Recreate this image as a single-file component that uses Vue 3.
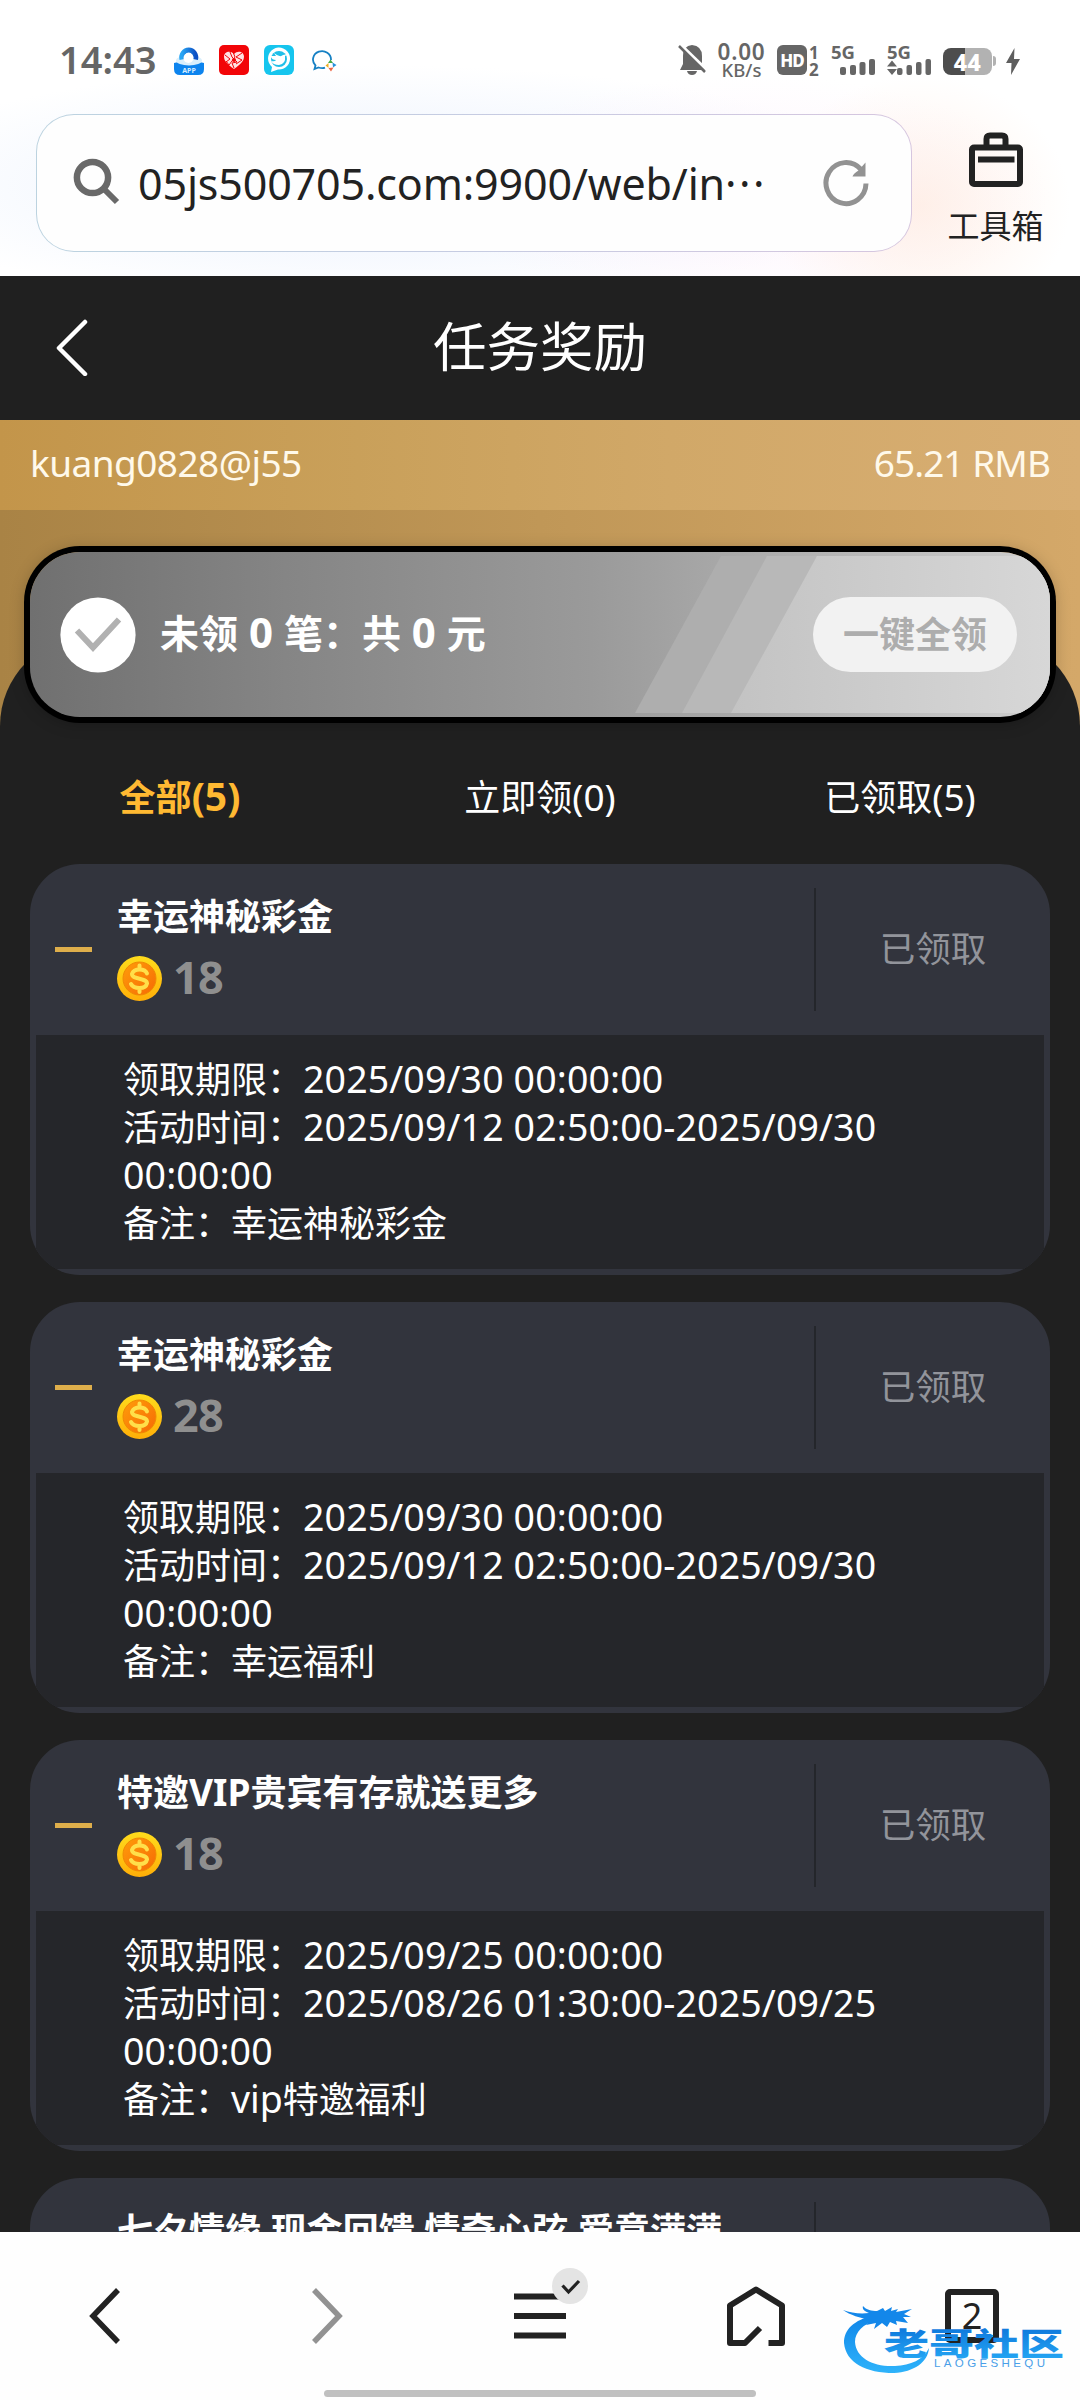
<script setup>
const tabs = [
  { label: '全部', count: 5, active: true },
  { label: '立即领', count: 0, active: false },
  { label: '已领取', count: 5, active: false },
]

const status = '已领取'

const rewards = [
  {
    title: [{ t: '幸运神秘彩金' }],
    amount: 18,
    deadline: '2025/09/30 00:00:00',
    from: '2025/09/12 02:50:00-2025/09/30',
    to: '00:00:00',
    note: [{ t: '幸运神秘彩金' }],
  },
  {
    title: [{ t: '幸运神秘彩金' }],
    amount: 28,
    deadline: '2025/09/30 00:00:00',
    from: '2025/09/12 02:50:00-2025/09/30',
    to: '00:00:00',
    note: [{ t: '幸运福利' }],
  },
  {
    title: [{ t: '特邀' }, { t: 'VIP', latin: true }, { t: '贵宾有存就送更多' }],
    amount: 18,
    deadline: '2025/09/25 00:00:00',
    from: '2025/08/26 01:30:00-2025/09/25',
    to: '00:00:00',
    note: [{ t: 'vip', latin: true }, { t: '特邀福利' }],
  },
  {
    title: [{ t: '七夕情缘 现金回馈 情奇心弦 爱意满满' }],
    amount: null,
  },
]
</script>

<template>
  <div class="screen">
    <header class="browser">
      <div class="status-bar">
        <div class="status-left">
          <span class="clock">14:43</span>
          <svg class="app-icon" width="30" height="30" viewBox="0 0 30 30">
            <defs>
              <linearGradient id="arc" x1="0" x2="1"><stop offset="0" stop-color="#2aa6f4" /><stop offset="1" stop-color="#0b4fc4" /></linearGradient>
            </defs>
            <path d="M0 18q15-5 30 0v6q0 6-6 6H6q-6 0-6-6z" fill="#0d84ee" />
            <ellipse cx="15" cy="15.500" rx="13" ry="5" fill="#d9effc" />
            <path d="M8 14.500a7 7.500 0 1 1 13.500 0" fill="none" stroke="url(#arc)" stroke-width="5" />
            <circle cx="14.500" cy="13" r="5" fill="#fff" />
            <text x="15" y="28" text-anchor="middle" font-size="7" font-weight="700" fill="#d5ecff" class="latin">APP</text>
          </svg>
          <svg class="app-icon" width="30" height="30" viewBox="0 0 30 30">
            <rect width="30" height="30" rx="5" fill="#f20508" />
            <path d="M15 24C8 19 5 16 5 11.500 5 7 11 4.500 15 9c4-4.500 10-2 10 2.500C25 16 22 19 15 24z" fill="#ffe3e3" />
            <path d="M6 10l5 4-4 3m4-10 2 5 5 5-5 1 2 5m8-15-6 4 6 3-6 4m-3-12 2 5-6 8-3-4" fill="none" stroke="#f20508" stroke-width="1" />
            <circle cx="15" cy="15" r="2" fill="#f20508" />
          </svg>
          <svg class="app-icon" width="30" height="30" viewBox="0 0 30 30">
            <rect width="30" height="30" rx="6" fill="#16c5ee" />
            <path d="M7 27l1-5a11 11 0 1 1 6 2.500z" fill="#fff" />
            <circle cx="15" cy="14" r="8" fill="#20bfe8" />
            <path d="M4 11h8l-2-3q6 5 9 2l5-1-3 2q1 8-6 9-6 0-8-4 4 1 5-1-4 0-5-3z" fill="#fff" />
          </svg>
          <svg class="chat-icon" width="26" height="24" viewBox="0 0 26 24">
            <path d="M20 10a9 8.500 0 1 0-15.500 5.500L3.500 19l4-1.500q4 1.200 6.500.2" fill="none" stroke="#1680c4" stroke-width="1.800" />
            <path d="M17 13l2.500-3.500L22 13z" fill="#45aa43" /><path d="M21.500 12.500l4 2.500-3.500 2.500z" fill="#2492dc" />
            <path d="M22.500 17.500l-2.500 4-2.500-3.500z" fill="#ec6543" /><path d="M17.500 18l-3-2.500 3-2.500z" fill="#f0ad21" />
          </svg>
        </div>
        <div class="status-right">
          <svg class="bell" width="28" height="32" viewBox="0 0 28 32">
            <path d="M14 1q10 1 10 11v8l3 6H2l3-6v-8Q5 2 14 1z" fill="#666" />
            <path d="M9 27h10q-1 4-5 4t-5-4z" fill="#666" />
            <path d="M2 0l27 26" stroke="#fff" stroke-width="3" />
            <path d="M1 2l26 26" stroke="#666" stroke-width="2.500" />
          </svg>
          <div class="speed"><span class="rate">0.00</span><span class="unit">KB/s</span></div>
          <div class="hd">HD</div>
          <div class="sims"><span>1</span><span>2</span></div>
          <svg class="sig1" width="45" height="38" viewBox="0 -6 45 38">
            <text x="0" y="15" font-size="18.500" font-weight="700" fill="#666" class="latin" textLength="24" lengthAdjust="spacingAndGlyphs">5G</text>
            <g fill="#666"><rect x="9" y="23" width="6" height="8" rx="2" /><rect x="19" y="21" width="6" height="10" rx="2" /><rect x="28.500" y="18" width="6" height="13" rx="2" /><rect x="38" y="15" width="6" height="16" rx="2" /></g>
          </svg>
          <svg class="sig2" width="45" height="38" viewBox="0 -6 45 38">
            <text x="0" y="15" font-size="18.500" font-weight="700" fill="#666" class="latin" textLength="24" lengthAdjust="spacingAndGlyphs">5G</text>
            <path d="M0 22.500l5-6 5 6zM0 25l5 6 5-6z" fill="#666" />
            <g fill="#666"><rect x="10" y="24" width="5.500" height="7" rx="2" /><rect x="19.500" y="21" width="5.500" height="10" rx="2" /><rect x="29" y="18" width="5.500" height="13" rx="2" /><rect x="38.500" y="15" width="5.500" height="16" rx="2" /></g>
          </svg>
          <div class="battery">44</div><i class="cap"></i>
          <svg class="bolt" width="14" height="27" viewBox="0 0 14 27"><path d="M8.500 0L0 15h5.500L5 27l9-16H8z" fill="#5e5e5e" /></svg>
        </div>
      </div>
      <div class="address-row">
        <div class="address">
          <svg class="search" width="50" height="50" viewBox="0 0 50 50">
            <circle cx="20.500" cy="20.500" r="15.600" fill="none" stroke="#696969" stroke-width="6.500" />
            <path d="M31 31L45 45" stroke="#696969" stroke-width="6" />
          </svg>
          <span class="url latin">05js500705.com:9900/web/in<b>···</b></span>
          <svg class="reload" width="48" height="48" viewBox="0 0 48 48">
            <path d="M44 24.500A20 20.500 0 1 1 39 10.500" fill="none" stroke="#929292" stroke-width="5" />
            <path d="M43.500 3.500v14H30.500q1-3 6-6z" fill="#929292" />
          </svg>
        </div>
        <div class="toolbox">
          <svg width="54" height="56" viewBox="0 0 54 56">
            <path d="M17.500 15V7q0-3.500 3.500-3.500h12q3.500 0 3.500 3.500v8" fill="none" stroke="#222" stroke-width="6" />
            <rect x="3" y="15.500" width="48" height="36.500" rx="2" fill="none" stroke="#222" stroke-width="6" />
            <path d="M9 27.500h36.500" stroke="#222" stroke-width="6" />
          </svg>
          <span>工具箱</span>
        </div>
      </div>
    </header>

    <main class="page">
      <div class="title-bar">
        <svg class="back" width="34" height="58" viewBox="0 0 34 58"><path d="M31 4L5 30l26 26" fill="none" stroke="#fff" stroke-width="4.500" stroke-linecap="round" stroke-linejoin="round" /></svg>
        <h1>任务奖励</h1>
      </div>
      <div class="account latin"><span class="user">kuang0828@j55</span><span class="money">65.21 RMB</span></div>

      <div class="hero">
        <div class="panel-top"></div>
        <section class="claim">
          <svg class="shine" width="420" height="165" viewBox="0 0 420 165" preserveAspectRatio="none">
            <defs>
              <linearGradient id="glow" x1="0" x2="1"><stop offset="0" stop-color="#c3c3c3" /><stop offset="1" stop-color="#d7d7d7" /></linearGradient>
            </defs>
            <path d="M5 161L91 4h329v157z" fill="#aeaeae" />
            <path d="M52 161L137 4h283v157z" fill="#b8b8b8" />
            <path d="M101 161L187 4h233v157z" fill="url(#glow)" />
          </svg>
          <svg class="tick" width="76" height="76" viewBox="0 0 76 76">
            <circle cx="38" cy="38" r="37.600" fill="#fff" />
            <path d="M17 33.500l16 17L59 22.500" fill="none" stroke="#b1b1b1" stroke-width="6" />
          </svg>
          <span class="claim-text">未领<i class="latin"> 0 </i>笔：共<i class="latin"> 0 </i>元</span>
          <button class="claim-btn">一键全领</button>
        </section>
      </div>

      <nav class="tabs">
        <span v-for="t in tabs" :key="t.label" :class="{ active: t.active }">{{ t.label }}<i class="latin">({{ t.count }})</i></span>
      </nav>

      <section class="list">
        <article v-for="(r, i) in rewards" :key="i" class="card">
          <div class="card-head">
            <i class="dash"></i>
            <div class="info">
              <h2><span v-for="(p, k) in r.title" :key="k" :class="{ latin: p.latin, inl: p.latin }">{{ p.t }}</span></h2>
              <div v-if="r.amount" class="amount">
                <svg width="45" height="45" viewBox="0 0 45 45">
                  <defs>
                    <linearGradient id="rim" x1="0" x2="0" y1="0" y2="1"><stop offset="0" stop-color="#ffdc1c" /><stop offset="1" stop-color="#ffae08" /></linearGradient>
                    <linearGradient id="core" x1="0" x2="1" y1="0" y2="1"><stop offset="0" stop-color="#ff9d0a" /><stop offset="1" stop-color="#f66a05" /></linearGradient>
                  </defs>
                  <circle cx="22.500" cy="22.500" r="22.500" fill="url(#rim)" />
                  <circle cx="22.500" cy="22.500" r="16.500" fill="url(#core)" stroke="#ef8904" stroke-width="1" />
                  <path d="M22.500 9.500v4m0 18.500v4M30 17.500q-1.500-4-7.500-4t-7.500 4.500c0 6 15 3.500 15 9.500q-1 4.500-7.500 4.500T14 28" fill="none" stroke="#ffdf4a" stroke-width="4" stroke-linecap="round" />
                </svg>
                <b class="latin">{{ r.amount }}</b>
              </div>
            </div>
            <div class="state"><template v-if="r.amount">{{ status }}</template></div>
          </div>
          <div v-if="r.amount" class="card-body">
            <p>领取期限：<i class="latin">{{ r.deadline }}</i></p>
            <p>活动时间：<i class="latin">{{ r.from }}</i></p>
            <p><i class="latin">{{ r.to }}</i></p>
            <p>备注：<span v-for="(p, k) in r.note" :key="k" :class="{ latin: p.latin, inl: p.latin }">{{ p.t }}</span></p>
          </div>
        </article>
      </section>
    </main>

    <footer class="toolbar">
      <div class="slot"><svg class="prev" width="34" height="56" viewBox="0 0 34 56"><path d="M30 2L5 28l25 26" fill="none" stroke="#222" stroke-width="5.500" /></svg></div>
      <div class="slot"><svg class="next" width="34" height="56" viewBox="0 0 34 56"><path d="M4 2l25 26L4 54" fill="none" stroke="#929292" stroke-width="5.500" /></svg></div>
      <div class="slot">
        <div class="menu">
          <svg width="52" height="46" viewBox="0 0 52 46"><path d="M0 3.500h52M0 23h52M0 42.500h52" stroke="#222" stroke-width="6" /></svg>
          <svg class="badge" width="36" height="36" viewBox="0 0 36 36"><circle cx="18" cy="18" r="18" fill="#e4e4e4" /><path d="M10.500 17.500l6 6.500L27 13" fill="none" stroke="#222" stroke-width="3.200" /></svg>
        </div>
      </div>
      <div class="slot"><svg width="60" height="62" viewBox="0 0 60 62"><path d="M42.500 58H56V20.500L30 4.500 4 20.500V58H19L34 43" fill="none" stroke="#222" stroke-width="6" stroke-linejoin="round" /></svg></div>
      <div class="slot"><div class="pages latin">2</div></div>
      <i class="home-bar"></i>
    </footer>

    <svg class="watermark" width="230" height="80" viewBox="0 0 230 80">
      <defs>
        <linearGradient id="blue" gradientUnits="userSpaceOnUse" x1="0" x2="0" y1="8" y2="74"><stop offset="0" stop-color="#0b7fe6" /><stop offset="1" stop-color="#2fb4fb" /></linearGradient>
        <linearGradient id="ink" x1="0" x2="0" y1="0" y2="1"><stop offset="0.2" stop-color="#0f78dc" /><stop offset="1" stop-color="#27abf6" /></linearGradient>
      </defs>
      <path d="M34 15C12 20 3 30 3 43c2 20 22 30 50 30 20-1 34-11 35-25-6 12-18 17-34 18C32 67 15 58 14 42c0-10 8-18 22-22z" fill="url(#blue)" />
      <path d="M2 10c8 3 17 4 26 3-5-2-7-4-6-7 3 4 9 5 14 5l6-3 2 3 7-4-1 4 7-2-2 3 16-3-8 5 7 3-8 0 5 6-12-2 1 4-7-3-3 5-5-4-8 6 2-6-10 2 5-5C19 18 9 15 2 10z" fill="#1387ea" />
      <text x="43" y="54.500" class="wm" font-size="31" fill="url(#ink)" textLength="180" lengthAdjust="spacingAndGlyphs">老哥社区</text>
      <text x="93" y="67" class="wm-latin" font-size="11.500" fill="#4a9fe8" textLength="111" lengthAdjust="spacing">LAOGESHEQU</text>
    </svg>
  </div>
</template>

<style>
html,
body {
  margin: 0;
  background: #202020;
}
</style>

<style scoped>
.screen {
  position: relative;
  width: 1080px;
  height: 2400px;
  display: flex;
  flex-direction: column;
  overflow: hidden;
  background: #202020;
  font-family: "Noto Sans CJK SC", "Noto Sans", sans-serif;
}
.screen svg {
  display: block;
  flex: none;
}
.latin {
  font-family: "Noto Sans", "Noto Sans CJK SC", sans-serif;
}
i {
  font-style: normal;
}

/* browser chrome */
.browser {
  height: 276px;
  flex: none;
  background:
    radial-gradient(ellipse 150px 130px at 920px 205px, rgba(255, 232, 218, 0.6), rgba(255, 240, 230, 0) 100%),
    radial-gradient(ellipse 300px 120px at 750px 195px, rgba(252, 236, 250, 0.6), rgba(252, 240, 250, 0) 100%),
    radial-gradient(ellipse 520px 120px at 380px 185px, rgba(228, 237, 253, 0.8), rgba(240, 246, 255, 0) 100%),
    #fff;
}
.status-bar {
  height: 114px;
  display: flex;
  justify-content: space-between;
  align-items: flex-start;
  box-sizing: border-box;
  padding: 44px 60px 0 59px;
  color: #666;
  font-family: "Noto Sans", sans-serif;
}
.status-left,
.status-right {
  display: flex;
  align-items: flex-start;
}
.clock {
  width: 115px;
  height: 32px;
  font-size: 38px;
  line-height: 31px;
  font-weight: 600;
}
.app-icon {
  margin: 1px 15px 0 0;
}
.chat-icon {
  margin: 6px 0 0 2px;
}
.bell {
  margin-right: 10px;
}
.speed {
  width: 51px;
  display: flex;
  flex-direction: column;
  align-items: center;
  font-weight: 600;
}
.rate {
  font-size: 22.5px;
  line-height: 15px;
  letter-spacing: 0.8px;
}
.unit {
  font-size: 18.5px;
  line-height: 22px;
  font-weight: 500;
}
.hd {
  width: 30px;
  height: 30px;
  margin: 1px 0 0 10px;
  border-radius: 6px;
  background: #666;
  color: #fff;
  font-size: 17px;
  line-height: 31px;
  font-weight: 800;
  text-align: center;
  letter-spacing: -1px;
}
.sims {
  width: 12px;
  margin-left: 2px;
  display: flex;
  flex-direction: column;
  font-size: 17px;
  line-height: 17px;
  font-weight: 700;
}
.sig1 {
  margin: -6px 0 0 10px;
}
.sig2 {
  margin: -6px 0 0 11px;
}
.battery {
  width: 49px;
  height: 27px;
  margin: 4px 0 0 11px;
  border-radius: 8px;
  background: linear-gradient(90deg, #4d4d4d 44%, #b2b2b2 44%);
  color: #fff;
  font-size: 23px;
  line-height: 28px;
  font-weight: 800;
  text-align: center;
  letter-spacing: 0.5px;
}
.cap {
  width: 3px;
  height: 10px;
  margin: 12px 10px 0 1px;
  background: #b2b2b2;
  border-radius: 0 3px 3px 0;
}
.bolt {
  margin-top: 4px;
}
.address-row {
  display: flex;
  height: 138px;
  padding-left: 36px;
}
.address {
  width: 876px;
  height: 138px;
  box-sizing: border-box;
  border: 1.5px solid transparent;
  border-radius: 38px;
  background:
    linear-gradient(#fefefe, #fefefe) padding-box,
    linear-gradient(90deg, #bcd3e0, #c6cce2 50%, #d6c6df) border-box;
  display: flex;
  align-items: center;
  padding: 0 41px 0 35px;
}
.search {
  margin-top: -3px;
}
.url {
  flex: 1;
  display: flex;
  margin: 2px 0 0 16px;
  font-size: 43px;
  line-height: 60px;
  letter-spacing: -0.15px;
  color: #222;
  white-space: nowrap;
}
.url b {
  font-weight: 400;
  letter-spacing: 2.5px;
}
.toolbox {
  width: 167px;
  display: flex;
  flex-direction: column;
  align-items: center;
  padding-top: 18px;
  color: #222;
  font-size: 32px;
  line-height: 40px;
}
.toolbox span {
  margin-top: 16px;
}

/* page */
.page {
  height: 1956px;
  flex: none;
  overflow: hidden;
}
.title-bar {
  position: relative;
  height: 144px;
  display: flex;
  align-items: center;
  justify-content: center;
}
.back {
  position: absolute;
  left: 54px;
  top: 42px;
}
h1 {
  margin: 0;
  font-size: 53.5px;
  line-height: 80px;
  font-weight: 400;
  color: #fff;
}
.title-bar h1 {
  margin-top: -9px;
}
.account {
  height: 90px;
  box-sizing: border-box;
  padding: 0 30px;
  display: flex;
  justify-content: space-between;
  font-size: 37px;
  line-height: 86px;
  color: #fff9ea;
  background: linear-gradient(90deg, #c3954a, #c9a05a 33%, #d1a868 62%, #d8ae73);
}
.user {
  letter-spacing: -0.55px;
}
.money {
  letter-spacing: -0.95px;
}
.hero {
  position: relative;
  height: 216px;
  box-sizing: border-box;
  padding: 42px 30px 0;
  background: linear-gradient(90deg, #a98345, #c09757 50%, #d4a869);
}
.panel-top {
  position: absolute;
  left: 0;
  right: 0;
  top: 126px;
  height: 90px;
  border-radius: 90px 90px 0 0;
  background: #202020;
}
.claim {
  position: relative;
  height: 165px;
  box-sizing: border-box;
  padding: 0 33px 0 30px;
  border-radius: 50px;
  background: linear-gradient(90deg, #707070, #858585 25%, #9a9a9a 55%, #a8a8a8 68%, #cfcfcf);
  box-shadow: 0 0 0 6px #000, 0 2px 16px 4px rgba(0, 0, 0, 0.25);
  display: flex;
  align-items: center;
  overflow: hidden;
}
.shine {
  position: absolute;
  left: 600px;
  top: 0;
}
.tick,
.claim-text,
.claim-btn {
  position: relative;
}
.claim-text {
  flex: 1;
  margin: -7px 0 0 24px;
  font-size: 39px;
  line-height: 60px;
  font-weight: 700;
  color: #fff;
  white-space: pre;
}
.claim-text i {
  font-size: 42px;
  line-height: 0;
}
.claim-btn {
  width: 204px;
  height: 75px;
  border: 0;
  border-radius: 38px;
  padding: 0 0 6px;
  background: #f2f2f2;
  color: #adadad;
  font-family: inherit;
  font-size: 36px;
  font-weight: 700;
}
.tabs {
  display: flex;
  height: 138px;
}
.tabs span {
  width: 360px;
  text-align: center;
  font-size: 36px;
  line-height: 138px;
  color: #fff;
}
.tabs i {
  font-size: 37px;
  line-height: 0;
}
.tabs .active {
  font-weight: 700;
  color: #ffb932;
}
.tabs .active i {
  font-size: 39px;
}

/* reward cards */
.list {
  display: flex;
  flex-direction: column;
  gap: 27px;
  padding: 0 30px;
}
.card {
  height: 411px;
  flex: none;
  box-sizing: border-box;
  padding: 0 6px 6px;
  border-radius: 50px;
  background: #32343d;
  overflow: hidden;
}
.card-head {
  height: 171px;
  display: flex;
}
.dash {
  width: 37px;
  height: 5px;
  margin: 83px 25px 0 19px;
  background: #deae4b;
}
.info {
  width: 697px;
}
h2 {
  margin: 24px 0 0;
  font-size: 36px;
  line-height: 52px;
  font-weight: 700;
  color: #fff;
  white-space: pre;
  word-spacing: 1.5px;
}
.inl {
  font-size: 37px;
  line-height: 0;
}
.amount {
  height: 45px;
  margin-top: 16px;
  display: flex;
  align-items: center;
}
.amount b {
  margin-left: 11px;
  font-size: 45px;
  line-height: 42px;
  letter-spacing: -0.8px;
  padding-bottom: 3px;
  color: #8f8f8f;
}
.state {
  flex: 1;
  height: 123px;
  margin-top: 24px;
  border-left: 2px solid #24262b;
  padding-left: 6px;
  text-align: center;
  font-size: 35.5px;
  line-height: 118px;
  color: #92949b;
}
.card-body {
  height: 234px;
  box-sizing: border-box;
  padding: 18px 0 0 87px;
  background: #25262a;
}
p {
  margin: 0;
  height: 48px;
  font-size: 36px;
  line-height: 48px;
  color: #fff;
  white-space: pre;
}
p .latin {
  font-size: 37.5px;
  line-height: 0;
}
p i.latin {
  letter-spacing: 0.12px;
}
p > i.latin:first-child {
  line-height: 48px;
}

/* bottom toolbar */
.toolbar {
  position: relative;
  height: 168px;
  flex: none;
  background: #fefefe;
  display: flex;
}
.slot {
  width: 216px;
  height: 168px;
  display: flex;
  align-items: center;
  justify-content: center;
}
.prev {
  margin-right: 6px;
}
.next {
  margin-left: 6px;
}
.menu {
  position: relative;
}
.badge {
  position: absolute;
  left: 38px;
  top: -25px;
}
.pages {
  width: 54px;
  height: 54px;
  box-sizing: border-box;
  border: 6px solid #222;
  border-radius: 5px;
  text-align: center;
  font-size: 36px;
  line-height: 41px;
  color: #222;
}
.home-bar {
  position: absolute;
  left: 324px;
  bottom: 3px;
  width: 432px;
  height: 7px;
  border-radius: 4px;
  background: #c0c0c0;
}
.watermark {
  position: absolute;
  left: 841px;
  top: 2300px;
}
.wm {
  font-family: "Noto Sans CJK SC", sans-serif;
  font-weight: 900;
}
.wm-latin {
  font-family: "Liberation Sans", sans-serif;
  font-weight: 400;
}
</style>
